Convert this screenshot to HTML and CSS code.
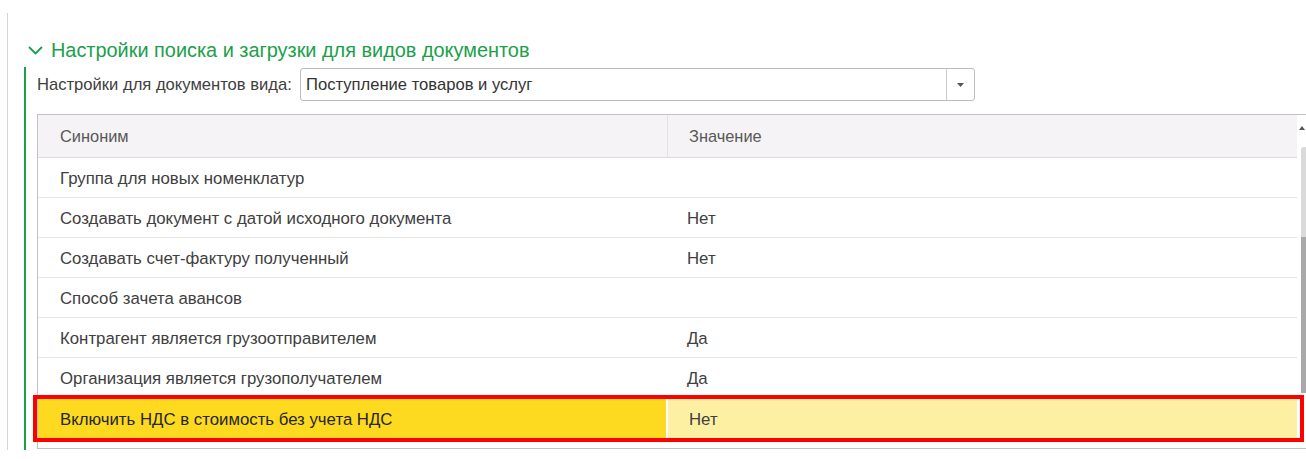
FILE: index.html
```html
<!DOCTYPE html>
<html lang="ru">
<head>
<meta charset="utf-8">
<title>Настройки поиска и загрузки</title>
<link rel="stylesheet" href="styles.css">
</head>
<body>
<div class="page">
  <div class="frame">
    <div class="section-title">
      <svg class="chevron" width="15" height="9" viewBox="0 0 15 9"><path d="M1 1 L7.5 7.5 L14 1" fill="none" stroke="#1b9f4b" stroke-width="1.8"/></svg>
      <span>Настройки поиска и загрузки для видов документов</span>
    </div>
    <div class="group">
      <div class="field-row">
        <span class="field-label">Настройки для документов вида:</span>
        <div class="select">
          <span class="select-value">Поступление товаров и услуг</span>
          <span class="select-btn"><svg width="7" height="4" viewBox="0 0 7 4"><path d="M0 0 H7 L3.5 4 Z" fill="#555"/></svg></span>
        </div>
      </div>
      <div class="table-wrap">
        <div class="grid">
          <div class="grid-body">
            <div class="row head">
              <div class="cell c1">Синоним</div>
              <div class="cell c2">Значение</div>
            </div>
            <div class="row"><div class="cell c1">Группа для новых номенклатур</div><div class="cell c2"></div></div>
            <div class="row"><div class="cell c1">Создавать документ с датой исходного документа</div><div class="cell c2">Нет</div></div>
            <div class="row"><div class="cell c1">Создавать счет-фактуру полученный</div><div class="cell c2">Нет</div></div>
            <div class="row"><div class="cell c1">Способ зачета авансов</div><div class="cell c2"></div></div>
            <div class="row"><div class="cell c1">Контрагент является грузоотправителем</div><div class="cell c2">Да</div></div>
            <div class="row"><div class="cell c1">Организация является грузополучателем</div><div class="cell c2">Да</div></div>
            <div class="row selected"><div class="cell c1">Включить НДС в стоимость без учета НДС</div><div class="cell c2">Нет</div></div>
          </div>
          <div class="scrollbar">
            <div class="scroll-up"></div>
            <div class="scroll-track"></div>
            <div class="scroll-thumb"></div>
          </div>
        </div>
        <div class="mark"></div>
      </div>
    </div>
  </div>
</div>
</body>
</html>
```

FILE: styles.css
```css
html, body {
  margin: 0;
  padding: 0;
  background: #fff;
  overflow: hidden;
}

body {
  font-family: "Liberation Sans", Arial, sans-serif;
  color: #404040;
  width: 1306px;
  height: 461px;
}

.page {
  padding: 13px 0 0 7px;
}

.frame {
  border-left: 1px solid #d4d4d4;
  height: 437px;
}

.section-title {
  display: flex;
  align-items: center;
  height: 20px;
  padding: 27px 0 0 20px;
  margin-bottom: 7px;
  color: #1b9f4b;
  font-size: 19.9px;
}

.chevron {
  margin-right: 8px;
  margin-top: 1px;
}

.group {
  margin-left: 16px;
  border-left: 2px solid #1b9f4b;
  padding-left: 11px;
  height: 383px;
}

.field-row {
  display: flex;
  align-items: center;
  padding-top: 1px;
  margin-bottom: 13px;
}

.field-label {
  font-size: 16.6px;
  color: #404040;
  width: 263px;
  white-space: nowrap;
}

.select {
  display: flex;
  width: 673px;
  height: 31px;
  border: 1px solid #bcbcbc;
  border-radius: 3px;
}

.select-value {
  flex: 1;
  display: flex;
  align-items: center;
  padding-left: 5px;
  font-size: 16.6px;
  color: #333;
}

.select-btn {
  width: 27px;
  border-left: 1px solid #cacaca;
  display: flex;
  align-items: center;
  justify-content: center;
}

.table-wrap {
  position: relative;
  width: 1280px;
}

.grid {
  display: flex;
  border: 1px solid #c2c2c2;
  border-right: none;
  height: 333px;
}

.grid-body {
  width: 1259px;
}

.row {
  display: flex;
  height: 39px;
  border-bottom: 1px solid #e6e6e6;
  font-size: 16.8px;
}

.row.head {
  height: 42px;
  background: #f6f3f6;
  border-bottom: 1px solid #dadada;
  color: #585858;
  font-size: 16.4px;
}

.cell {
  display: flex;
  align-items: center;
  box-sizing: border-box;
  white-space: nowrap;
  padding-top: 2px;
}

.head .cell {
  padding-top: 0;
}

.c1 {
  width: 628px;
  padding-left: 22px;
}

.c2 {
  flex: 1;
  padding-left: 21px;
}

.head .c1 {
  border-right: 1px solid #e2e2e2;
  width: 630px;
}

.row.selected {
  border-bottom: none;
  padding-top: 1px;
  color: #262626;
}

.selected .c1 {
  background: #fdd91f;
  width: 628px;
  margin-right: 2px;
}

.selected .c2 {
  background: #fdf0a3;
  color: #404040;
}

.scrollbar {
  width: 9px;
  display: flex;
  flex-direction: column;
  align-items: flex-end;
}

.scroll-up {
  margin-top: 11px;
  width: 0;
  height: 0;
  border-left: 3px solid transparent;
  border-right: 3px solid transparent;
  border-bottom: 4px solid #555;
  margin-right: 1px;
}

.scroll-track {
  margin-top: 17px;
  width: 5px;
  height: 90px;
  background: #dadada;
  border-radius: 3px 0 0 0;
}

.scroll-thumb {
  width: 5px;
  height: 156px;
  background: #a9a9a9;
}

.mark {
  position: absolute;
  left: -4px;
  top: 281px;
  width: 1263px;
  height: 39px;
  border: 4px solid #ff0000;
}
```
